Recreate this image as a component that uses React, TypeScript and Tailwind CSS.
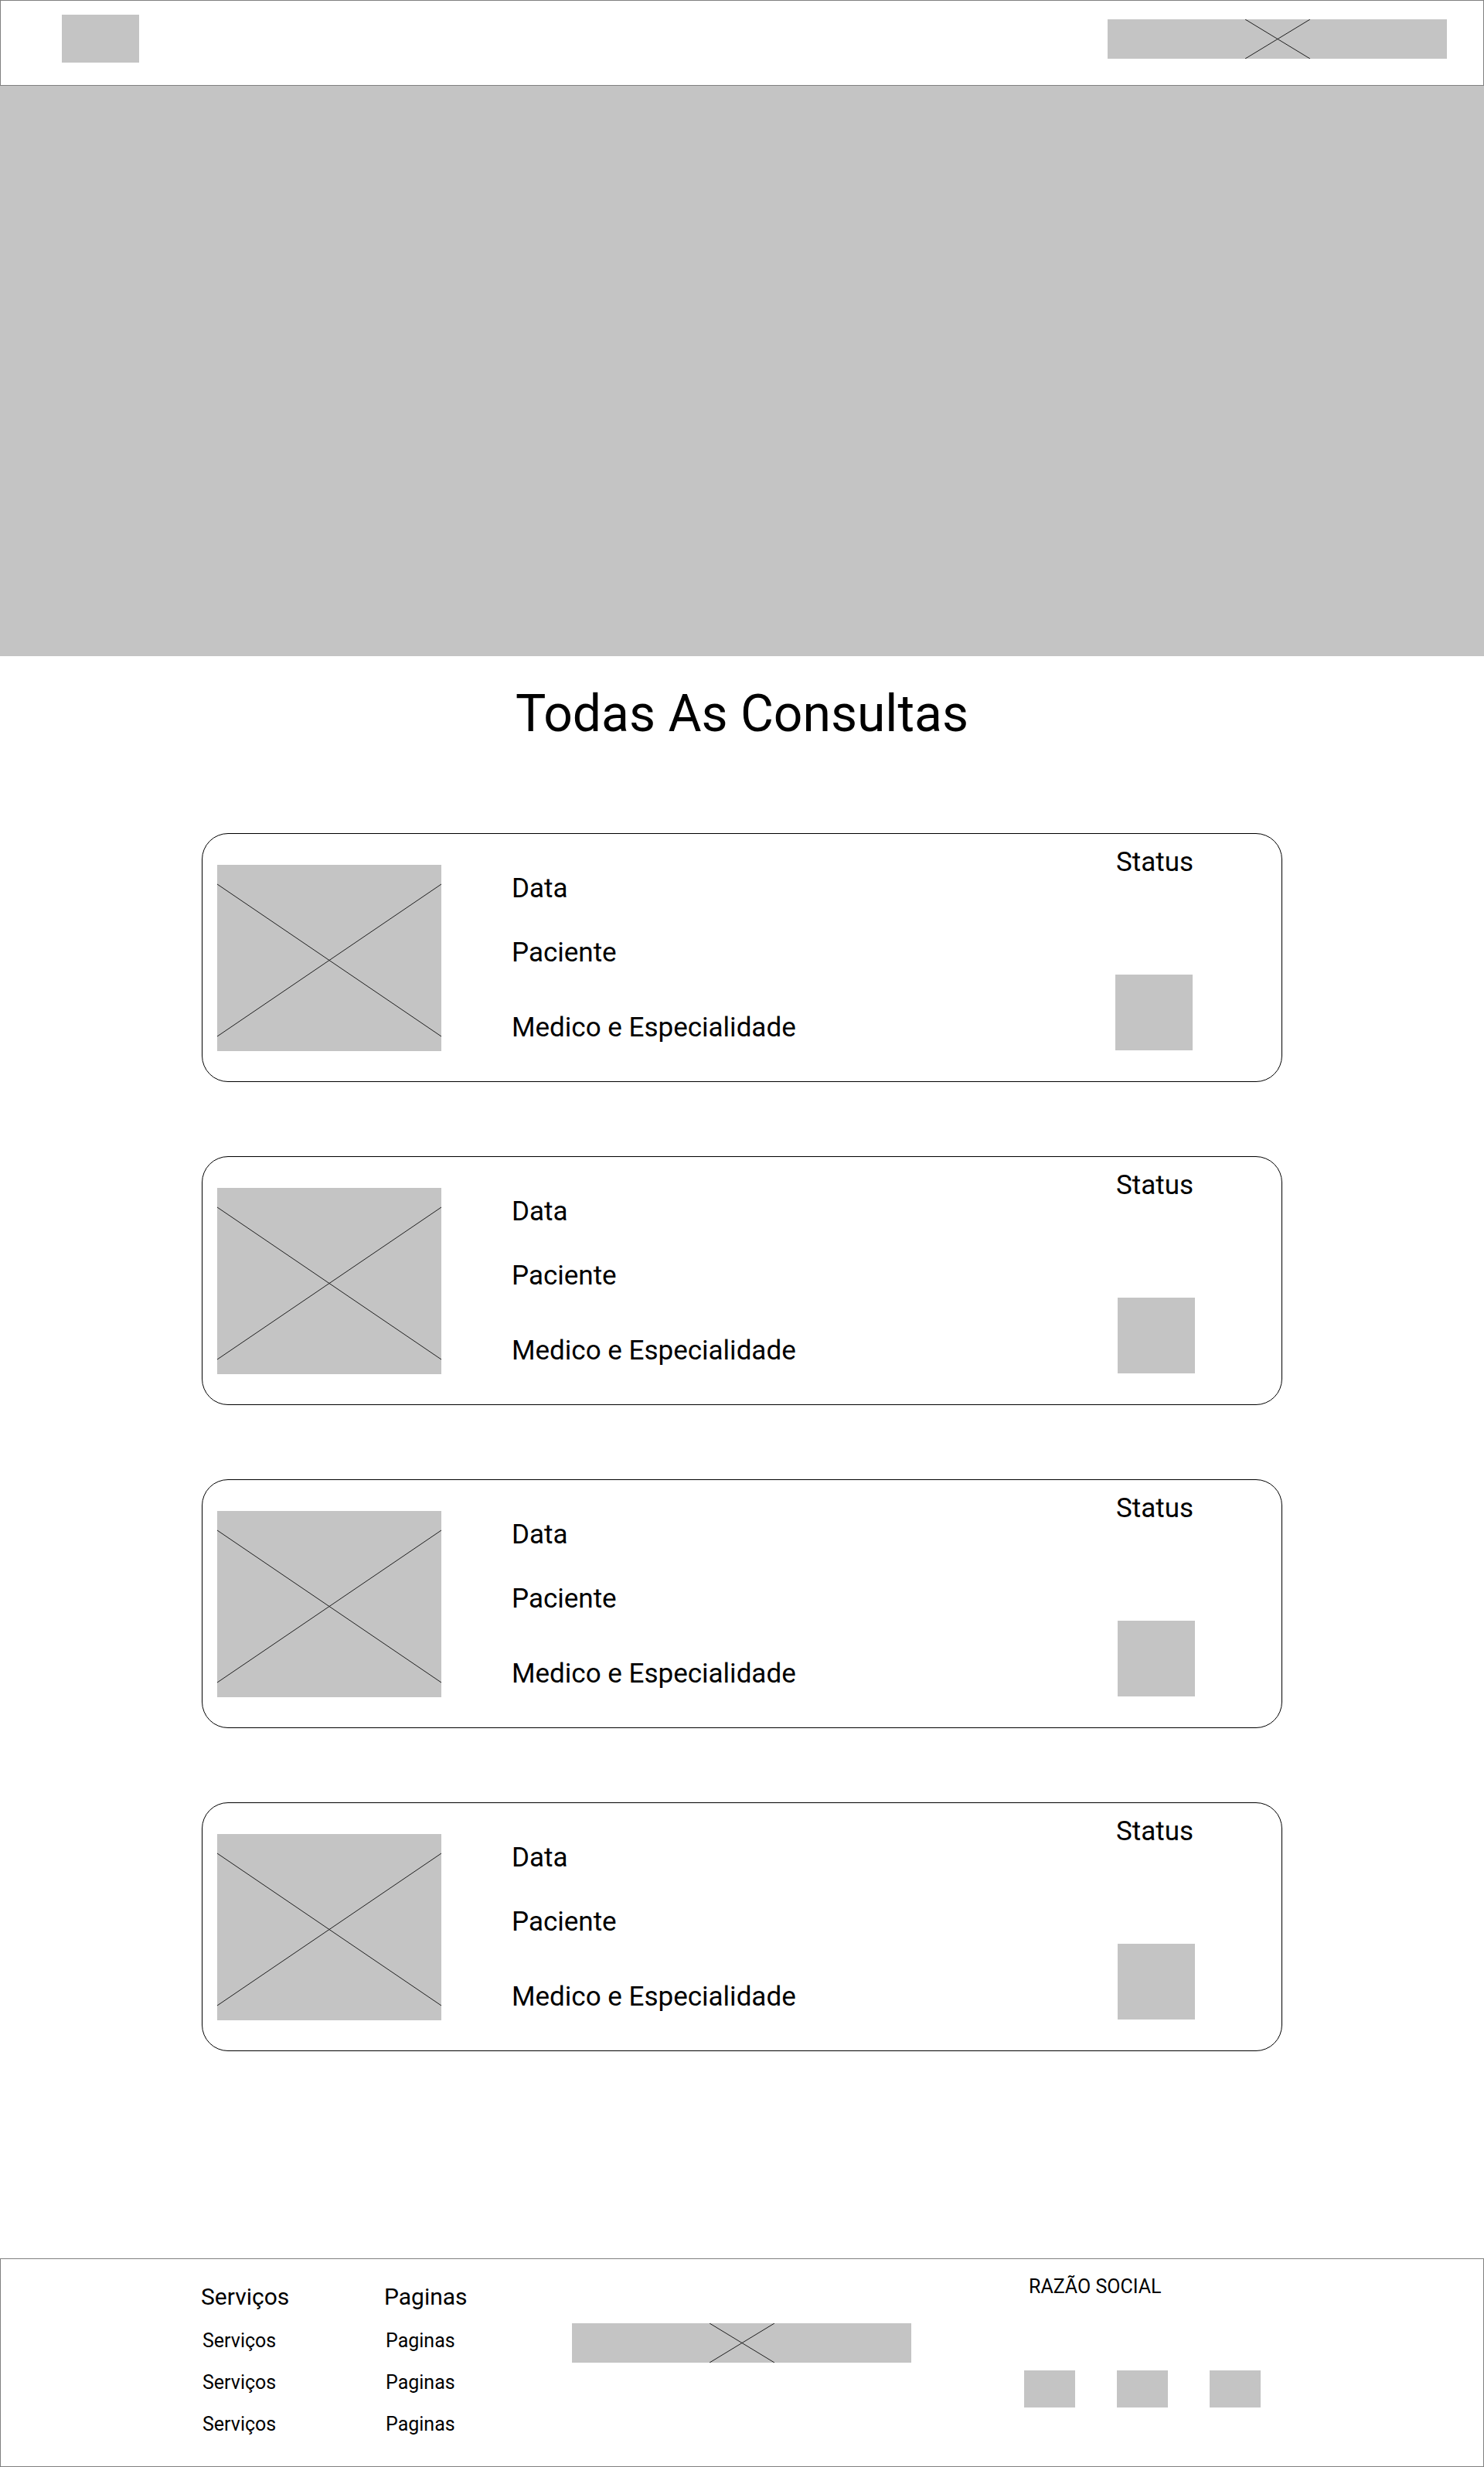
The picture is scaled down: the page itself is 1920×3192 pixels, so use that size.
import React from 'react';

const font = { fontFamily: 'Roboto, "Noto Sans", sans-serif' };

// gray placeholder with the wireframe "X" drawn in its middle
function WideImage() {
  return (
    <svg width="439" height="51" className="block shrink-0">
      <rect width="439" height="51" fill="#c4c4c4" />
      <line x1="178" y1="0" x2="262" y2="51" stroke="#1f1f1f" strokeWidth="1" />
      <line x1="178" y1="51" x2="262" y2="0" stroke="#1f1f1f" strokeWidth="1" />
    </svg>
  );
}

function CardImage() {
  return (
    <svg width="290" height="241" className="block shrink-0">
      <rect width="290" height="241" fill="#c4c4c4" />
      <line x1="0" y1="25" x2="290" y2="222" stroke="#1f1f1f" strokeWidth="1" />
      <line x1="0" y1="222" x2="290" y2="25" stroke="#1f1f1f" strokeWidth="1" />
    </svg>
  );
}

type Consulta = { id: number; boxShift: boolean };

const consultas: Consulta[] = [
  { id: 1, boxShift: false },
  { id: 2, boxShift: true },
  { id: 3, boxShift: true },
  { id: 4, boxShift: true },
];

function ConsultaCard({ boxShift }: { boxShift: boolean }) {
  return (
    <div className="mx-auto flex h-[322px] w-[1398px] rounded-[34px] border border-black pl-[19px]">
      <div className="mt-[40px]">
        <CardImage />
      </div>
      <div className="ml-[91px] flex w-[781px] flex-col pt-[53px] text-[35px] leading-none text-black">
        <span>Data</span>
        <span className="mt-[48px]">Paciente</span>
        <span className="mt-[62px]">Medico e Especialidade</span>
      </div>
      <div className="flex w-[110px] flex-col pt-[19px]">
        <span className="ml-[1px] text-[35px] leading-none text-black">Status</span>
        <div className={boxShift ? 'mt-[128px] ml-[3px] h-[98px] w-[100px] bg-[#c4c4c4]' : 'mt-[128px] h-[98px] w-[100px] bg-[#c4c4c4]'} />
      </div>
    </div>
  );
}

const footerLinks = ['Serviços', 'Paginas'];

export default function App() {
  return (
    <div className="w-[1920px] bg-white" style={font}>
      <header className="flex h-[111px] items-start justify-between border border-[#808080] pl-[79px] pr-[47px]">
        <div className="mt-[18px] h-[62px] w-[100px] bg-[#c4c4c4]" />
        <div className="mt-[24px]">
          <WideImage />
        </div>
      </header>

      <div className="h-[738px] w-full bg-[#c4c4c4]" />

      <h1 className="mt-[42px] text-center text-[66px] font-normal leading-none text-black">Todas As Consultas</h1>

      <div className="mt-[121px] mb-[268px] flex flex-col gap-[96px]">
        {consultas.map((c) => (
          <ConsultaCard key={c.id} boxShift={c.boxShift} />
        ))}
      </div>

      <footer className="flex h-[270px] items-start border border-[#808080] pl-[259px] text-black">
        {footerLinks.map((label, i) => (
          <div key={label} className={i === 0 ? 'flex w-[237px] flex-col pt-[34px]' : 'flex w-[243px] flex-col pt-[34px]'}>
            <span className="text-[30px] leading-none">{label}</span>
            <span className="mt-[29px] ml-[2px] text-[25px] leading-none">{label}</span>
            <span className="mt-[29px] ml-[2px] text-[25px] leading-none">{label}</span>
            <span className="mt-[29px] ml-[2px] text-[25px] leading-none">{label}</span>
          </div>
        ))}
        <div className="mt-[83px]">
          <WideImage />
        </div>
        <div className="ml-[146px] flex flex-col pt-[23px]">
          <span className="ml-[6px] text-[25px] leading-none">RAZÃO SOCIAL</span>
          <div className="mt-[96px] flex gap-[54px]">
            <div className="h-[48px] w-[66px] bg-[#c4c4c4]" />
            <div className="h-[48px] w-[66px] bg-[#c4c4c4]" />
            <div className="h-[48px] w-[66px] bg-[#c4c4c4]" />
          </div>
        </div>
      </footer>
    </div>
  );
}
